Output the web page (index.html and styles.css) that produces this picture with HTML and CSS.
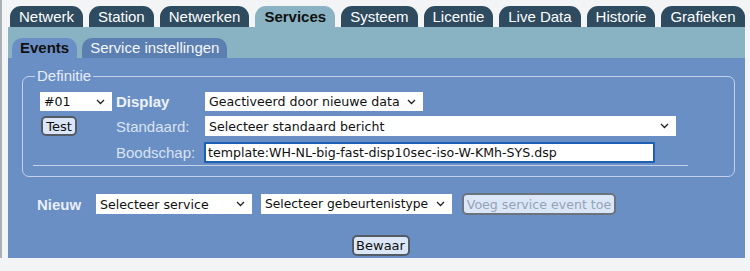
FILE: index.html
```html
<!DOCTYPE html>
<html lang="nl">
<head>
    <meta charset="UTF-8">
    <title>Services - Events</title>
    <link rel="stylesheet" href="styles.css">
</head>
<body>
    <div class="page">
        <ul class="tabs">
            <li class="tab">Netwerk</li>
            <li class="tab">Station</li>
            <li class="tab">Netwerken</li>
            <li class="tab active">Services</li>
            <li class="tab">Systeem</li>
            <li class="tab">Licentie</li>
            <li class="tab">Live Data</li>
            <li class="tab">Historie</li>
            <li class="tab">Grafieken</li>
        </ul>
        <div class="subbar">
            <ul class="subtabs">
                <li class="subtab active">Events</li>
                <li class="subtab">Service instellingen</li>
            </ul>
        </div>
        <div class="panel">
            <fieldset class="definitie">
                <legend>Definitie</legend>
                <div class="def-grid">
                    <div class="cell first">
                        <span class="select-wrap num">
                            <select class="sel"><option>#01</option></select>
                            <svg class="chev" width="9" height="6" viewBox="0 0 9 6"><path d="M1 1 L4.5 4.5 L8 1" fill="none" stroke="#222" stroke-width="1.3"/></svg>
                        </span>
                    </div>
                    <div class="cell label strong">Display</div>
                    <div class="cell">
                        <span class="select-wrap trigger">
                            <select class="sel"><option>Geactiveerd door nieuwe data</option></select>
                            <svg class="chev" width="9" height="6" viewBox="0 0 9 6"><path d="M1 1 L4.5 4.5 L8 1" fill="none" stroke="#222" stroke-width="1.3"/></svg>
                        </span>
                    </div>

                    <div class="cell first"><button class="btn test">Test</button></div>
                    <div class="cell label">Standaard:</div>
                    <div class="cell">
                        <span class="select-wrap standard">
                            <select class="sel"><option>Selecteer standaard bericht</option></select>
                            <svg class="chev" width="9" height="6" viewBox="0 0 9 6"><path d="M1 1 L4.5 4.5 L8 1" fill="none" stroke="#222" stroke-width="1.3"/></svg>
                        </span>
                    </div>

                    <div class="cell first"></div>
                    <div class="cell label">Boodschap:</div>
                    <div class="cell">
                        <input class="message" type="text" value="template:WH-NL-big-fast-disp10sec-iso-W-KMh-SYS.dsp">
                    </div>
                </div>
            </fieldset>

            <div class="new-row">
                <span class="new-label">Nieuw</span>
                <span class="select-wrap service">
                    <select class="sel"><option>Selecteer service</option></select>
                    <svg class="chev" width="9" height="6" viewBox="0 0 9 6"><path d="M1 1 L4.5 4.5 L8 1" fill="none" stroke="#222" stroke-width="1.3"/></svg>
                </span>
                <span class="select-wrap eventtype">
                    <select class="sel"><option>Selecteer gebeurtenistype</option></select>
                    <svg class="chev" width="9" height="6" viewBox="0 0 9 6"><path d="M1 1 L4.5 4.5 L8 1" fill="none" stroke="#222" stroke-width="1.3"/></svg>
                </span>
                <button class="btn add" disabled>Voeg service event toe</button>
            </div>

            <div class="save-row">
                <button class="btn save">Bewaar</button>
            </div>
        </div>
    </div>
</body>
</html>
```

FILE: styles.css
```css
body {
    margin: 0;
    background-color: #f3f4f5;
    font-family: "Liberation Sans", Arial, sans-serif;
    font-size: 15px;
    border-left: 2px solid #a9b0b6;
}
.page {
    width: 737px;
    padding: 6px 0 0 6px;
}
.tabs {
    list-style: none;
    margin: 0;
    padding: 0 0 0 2px;
    display: flex;
    gap: 6px;
}
.tab {
    background: #2e4b5f;
    color: #fff;
    height: 21px;
    line-height: 22px;
    padding: 0 9px;
    border-radius: 11px 11px 0 0;
}
.tab.active {
    background: #89b2c3;
    color: #111;
    font-weight: bold;
}
.subbar {
    background: #89b2c3;
    padding: 11px 0 0 4px;
}
.subtabs {
    list-style: none;
    margin: 0;
    padding: 0;
    display: flex;
    gap: 5px;
}
.subtab {
    background: #5a7fb0;
    color: #f4f7fb;
    height: 20px;
    line-height: 20px;
    padding: 0 8px;
    border-radius: 10px 10px 0 0;
}
.subtab.active {
    background: #6a8fc5;
    color: #111;
    font-weight: bold;
}
.panel {
    background: #6a8fc5;
    height: 200px;
    padding-top: 11px;
    box-sizing: border-box;
}
.definitie {
    margin: 0 10px 0 14px;
    padding: 6px 0 10px 10px;
    border: 1px solid #c3d1ea;
    border-radius: 7px;
}
.definitie legend {
    color: #e7edf7;
    padding: 0 2px;
    margin-left: 2px;
    line-height: 14px;
}
.def-grid {
    width: 655px;
    display: grid;
    grid-template-columns: 80px 89px 1fr;
    grid-template-rows: 24.5px 25.5px 26px;
    align-items: center;
    border-bottom: 1px solid #c3d1ea;
}
.cell.first {
    padding-left: 7px;
}
.cell.label {
    color: #d9e3f1;
    padding-left: 3px;
}
.cell.label.strong {
    color: #eef3fa;
    font-weight: bold;
}
.select-wrap {
    position: relative;
    display: inline-block;
    vertical-align: middle;
}
.sel {
    appearance: none;
    -webkit-appearance: none;
    border: none;
    border-radius: 0;
    background: #fff;
    color: #111;
    font-family: "DejaVu Sans", Tahoma, sans-serif;
    font-size: 12.6px;
    height: 19px;
    padding: 0 0 0 4px;
    margin: 0;
    display: block;
    width: 100%;
}
.chev {
    position: absolute;
    right: 7px;
    top: 7px;
    pointer-events: none;
}
.select-wrap.num { width: 72px; }
.select-wrap.trigger { width: 218px; margin-left: 3px; }
.select-wrap.standard { width: 471px; margin-left: 3px; }
.select-wrap.standard .sel { height: 20px; }
.message {
    width: 451px;
    height: 21px;
    box-sizing: border-box;
    margin: 0 0 0 2px;
    border: 2px solid #1d5fb5;
    border-radius: 1px;
    padding: 0 0 0 2px;
    font-family: "DejaVu Sans", Tahoma, sans-serif;
    font-size: 12.6px;
    color: #111;
    outline: none;
    display: block;
}
.btn {
    font-family: "DejaVu Sans", Tahoma, sans-serif;
    font-size: 13px;
    background: #dbe7f7;
    color: #111;
    border: 2px solid #535c66;
    border-radius: 5px;
    height: 21px;
    padding: 0 3px;
    line-height: 17px;
}
.btn.test {
    width: 36px;
    height: 20px;
    padding: 0;
    margin-left: 1px;
}
.new-row {
    display: flex;
    align-items: center;
    height: 22px;
    margin-top: 16px;
    padding-left: 29px;
}
.new-label {
    color: #e9eef8;
    font-weight: bold;
    width: 59px;
}
.select-wrap.service { width: 156px; }
.select-wrap.eventtype { width: 191px; margin-left: 9px; }
.select-wrap.service .sel,
.select-wrap.eventtype .sel { height: 20px; }
.select-wrap.eventtype .sel { font-size: 12.3px; }
.btn.add {
    margin-left: 10px;
    width: 154px;
    height: 22px;
    color: #94a3b8;
    border-color: #6a737e;
    padding: 0;
    font-size: 12.6px;
}
.save-row {
    display: flex;
    justify-content: center;
    padding: 20px 0 0 8px;
}
.btn.save {
    width: 58px;
    height: 21px;
    padding: 0;
}
```
